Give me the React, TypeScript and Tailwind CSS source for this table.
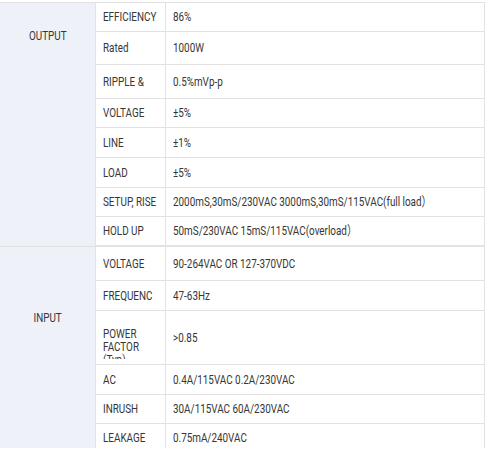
const font = { fontFamily: "Roboto, 'Noto Sans CJK SC', sans-serif" };

type Row = { label: string; value: string; h: string };

const output: Row[] = [
  { label: "EFFICIENCY", value: "86%", h: "h-[29px]" },
  { label: "Rated", value: "1000W", h: "h-[33px]" },
  { label: "RIPPLE &", value: "0.5%mVp-p", h: "h-[34px]" },
  { label: "VOLTAGE", value: "±5%", h: "h-[29px]" },
  { label: "LINE", value: "±1%", h: "h-[30px]" },
  { label: "LOAD", value: "±5%", h: "h-[30px]" },
  { label: "SETUP, RISE", value: "2000mS,30mS/230VAC 3000mS,30mS/115VAC(full load）", h: "h-[29px]" },
  { label: "HOLD UP", value: "50mS/230VAC 15mS/115VAC(overload）", h: "h-[29px]" },
];

const input: Row[] = [
  { label: "VOLTAGE", value: "90-264VAC OR 127-370VDC", h: "h-[34px]" },
  { label: "FREQUENC", value: "47-63Hz", h: "h-[30px]" },
  { label: "POWER FACTOR (Typ)", value: ">0.85", h: "h-[54px]" },
  { label: "AC", value: "0.4A/115VAC 0.2A/230VAC", h: "h-[30px]" },
  { label: "INRUSH", value: "30A/115VAC 60A/230VAC", h: "h-[29px]" },
  { label: "LEAKAGE", value: "0.75mA/240VAC", h: "h-[29px]" },
];

// the shot is squeezed sideways, so the glyphs are too
const Txt = ({ children, center }: { children: React.ReactNode; center?: boolean }) => (
  <span className={`inline-block whitespace-nowrap scale-x-[0.76] ${center ? "origin-center" : "origin-left"}`}>
    {children}
  </span>
);

const Line = ({ row }: { row: Row }) => {
  const multi = row.label.startsWith("POWER");
  return (
    <div className={`flex border-b border-[#e2e2e2] ${row.h}`}>
      <div className="w-[70px] shrink-0 border-r border-[#e2e2e2] pl-[7px] flex items-center">
        {multi ? (
          // label is clipped in the source, third line only peeks out
          <div className="self-start mt-[16px] h-[32px] overflow-hidden leading-[13px]">
            <div><Txt>POWER</Txt></div>
            <div><Txt>FACTOR</Txt></div>
            <div><Txt>(Typ)</Txt></div>
          </div>
        ) : (
          <Txt>{row.label}</Txt>
        )}
      </div>
      <div className="flex-1 pl-[7px] flex items-center">
        <Txt>{row.value}</Txt>
      </div>
    </div>
  );
};

const Group = ({ name, rows, pad }: { name: string; rows: Row[]; pad: string }) => (
  <div className="flex border-b border-[#e2e2e2]">
    <div className={`w-[96px] shrink-0 bg-[#eef2f8] border-r border-[#e2e2e2] text-center ${pad}`}>
      <Txt center>{name}</Txt>
    </div>
    <div className="flex-1">
      {rows.map((r) => (
        <Line key={r.label + r.value} row={r} />
      ))}
    </div>
  </div>
);

export default function App() {
  return (
    <div className="w-[488px] h-[450px] bg-white overflow-hidden" style={font}>
      <div className="mt-[2px] w-[485px] h-[446px] overflow-hidden border-t border-r border-[#e2e2e2] text-[13px] leading-[16px] text-[#363636]">
        <Group name="OUTPUT" rows={output} pad="pt-[25px]" />
        <Group name="INPUT" rows={input} pad="pt-[63px]" />
      </div>
    </div>
  );
}
